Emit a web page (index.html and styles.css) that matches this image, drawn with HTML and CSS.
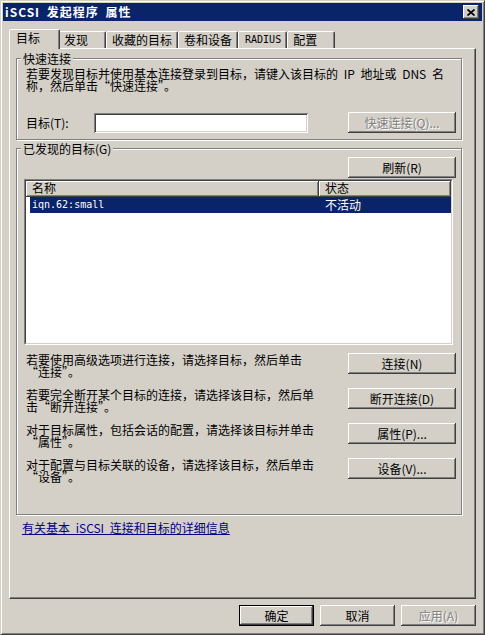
FILE: index.html
```html
<!DOCTYPE html>
<html>
<head>
    <meta charset="utf-8">
    <title>iSCSI 发起程序 属性</title>
    <link rel="stylesheet" href="styles.css">
</head>
<body>
<div class="window">
    <div class="titlebar">
        <span class="title">iSCSI 发起程序 属性</span>
        <button class="close">
            <svg width="8" height="7" viewBox="0 0 8 7">
                <path d="M0.5 0.5L7.5 6.5M7.5 0.5L0.5 6.5" stroke="#000" stroke-width="1.7" fill="none"/>
            </svg>
        </button>
    </div>

    <div class="tabs">
        <div class="tab active">目标</div>
        <div class="tab">发现</div>
        <div class="tab">收藏的目标</div>
        <div class="tab">卷和设备</div>
        <div class="tab mono">RADIUS</div>
        <div class="tab">配置</div>
    </div>

    <div class="panel">
        <div class="group quick">
            <div class="group-title">快速连接</div>
            <p class="desc">若要发现目标并使用基本连接登录到目标，请键入该目标的 IP 地址或 DNS 名<br>称，然后单击“快速连接”。</p>
            <div class="quick-row">
                <label class="field-label">目标(T):</label>
                <input class="field" type="text">
                <button class="btn side" disabled>快速连接(Q)...</button>
            </div>
        </div>

        <div class="group found">
            <div class="group-title">已发现的目标(G)</div>
            <button class="btn side refresh">刷新(R)</button>
            <div class="list">
                <div class="list-inner">
                    <div class="list-head">
                        <div class="col-name">名称</div>
                        <div class="col-state">状态</div>
                    </div>
                    <div class="list-row selected">
                        <div class="cell-name mono">iqn.62:small</div>
                        <div class="cell-state">不活动</div>
                    </div>
                </div>
            </div>

            <div class="actions">
                <div class="action">
                    <p>若要使用高级选项进行连接，请选择目标，然后单击<wbr>“连接”。</p>
                    <button class="btn side">连接(N)</button>
                </div>
                <div class="action">
                    <p>若要完全断开某个目标的连接，请选择该目标，然后单击<wbr>“断开连接”。</p>
                    <button class="btn side">断开连接(D)</button>
                </div>
                <div class="action">
                    <p>对于目标属性，包括会话的配置，请选择该目标并单击<wbr>“属性”。</p>
                    <button class="btn side">属性(P)...</button>
                </div>
                <div class="action">
                    <p>对于配置与目标关联的设备，请选择该目标，然后单击<wbr>“设备”。</p>
                    <button class="btn side">设备(V)...</button>
                </div>
            </div>
        </div>

        <a class="help-link" href="#">有关基本 iSCSI 连接和目标的详细信息</a>
    </div>

    <div class="footer">
        <button class="btn bottom default">确定</button>
        <button class="btn bottom">取消</button>
        <button class="btn bottom" disabled>应用(A)</button>
    </div>
</div>
</body>
</html>
```

FILE: styles.css
```css
body {
    margin: 0;
    background-color: #d4d0c8;
    font-family: "Noto Sans CJK SC", sans-serif;
    font-size: 12px;
    line-height: 12px;
    word-spacing: 3px;
    color: #000000;
}
.mono {
    font-family: "DejaVu Sans Mono", "Noto Sans CJK SC", monospace;
    font-size: 10px;
}
.window {
    width: 485px;
    height: 635px;
    box-sizing: border-box;
    display: flex;
    flex-direction: column;
    padding: 2px;
    background-color: #d4d0c8;
    border: 1px solid;
    border-color: #d4d0c8 #404040 #404040 #d4d0c8;
    box-shadow: inset 1px 1px #ffffff, inset -1px -1px #808080;
}
.titlebar {
    flex: none;
    height: 18px;
    display: flex;
    align-items: center;
    justify-content: space-between;
    padding: 0 3px 0 2px;
    background-color: #0a246a;
    color: #ffffff;
    font-weight: bold;
}
.title {
    letter-spacing: 1px;
}
.close {
    width: 16px;
    height: 14px;
    padding: 0;
    border: none;
    background-color: #d4d0c8;
    display: flex;
    align-items: center;
    justify-content: center;
    box-shadow: inset -1px -1px #404040, inset 1px 1px #ffffff, inset -2px -2px #808080;
}

/* tabs */
.tabs {
    flex: none;
    height: 19px;
    display: flex;
    align-items: flex-end;
    margin: 8px 6px 0;
    padding-left: 2px;
    position: relative;
    z-index: 1;
}
.tab {
    box-sizing: border-box;
    height: 17px;
    min-width: 48px;
    padding: 2px 5px 0;
    text-align: left;
    white-space: nowrap;
    background-color: #d4d0c8;
    border: 1px solid;
    border-bottom: none;
    border-color: #ffffff #404040 transparent #ffffff;
    border-radius: 2px 2px 0 0;
    box-shadow: inset -1px 0 #808080;
}
.tab.mono {
    line-height: 12px;
    padding-left: 6px;
}
.tab.active {
    height: 20px;
    min-width: 51px;
    margin: 0 -2px -1px;
    padding: 2px 6px 0;
    position: relative;
}

/* page */
.panel {
    flex: 1;
    display: flex;
    flex-direction: column;
    margin: 0 6px;
    padding: 9px 13px 0 6px;
    border: 1px solid;
    border-color: #ffffff #404040 #404040 #ffffff;
    box-shadow: inset -1px -1px #808080;
}
.group {
    display: flex;
    flex-direction: column;
    padding: 0 5px 6px 9px;
    border: 1px solid #808080;
    box-shadow: inset 1px 1px #ffffff, 1px 1px #ffffff;
}
.group-title {
    width: fit-content;
    margin: -6px 0 0 -5px;
    padding: 0 2px;
    background-color: #d4d0c8;
}
.desc {
    margin: 3px 0 0;
}
.quick-row {
    display: flex;
    align-items: center;
    margin-top: 20px;
}
.field-label {
    width: 68px;
}
.field {
    box-sizing: border-box;
    width: 214px;
    height: 20px;
    margin: 0;
    padding: 0 3px;
    border: none;
    outline: none;
    background-color: #ffffff;
    font: inherit;
    box-shadow: inset 1px 1px #808080, inset -1px -1px #ffffff, inset 2px 2px #404040, inset -2px -2px #d4d0c8;
}

/* buttons */
.btn {
    box-sizing: border-box;
    height: 21px;
    margin: 0;
    padding: 0;
    border: none;
    background-color: #d4d0c8;
    font-family: inherit;
    font-size: 12px;
    line-height: 12px;
    color: #000000;
    box-shadow: inset -1px -1px #404040, inset 1px 1px #ffffff, inset -2px -2px #808080;
}
.btn:disabled {
    color: #808080;
    text-shadow: 1px 1px #ffffff;
}
.btn.side {
    width: 108px;
    flex: none;
}
.quick-row .btn {
    margin-left: auto;
}
.btn.bottom {
    width: 75px;
}
.btn.default {
    box-shadow: inset 0 0 0 1px #000000, inset -2px -2px #404040, inset 2px 2px #ffffff, inset -3px -3px #808080;
}

/* discovered targets */
.found {
    margin-top: 8px;
    padding-bottom: 31px;
}
.refresh {
    align-self: flex-end;
    margin-top: 2px;
}
.list {
    height: 166px;
    box-sizing: border-box;
    margin: 1px 3px 0 -2px;
    border: 1px solid;
    border-color: #808080 #ffffff #ffffff #808080;
}
.list-inner {
    height: 100%;
    box-sizing: border-box;
    background-color: #ffffff;
    border: 1px solid;
    border-color: #404040 #d4d0c8 #d4d0c8 #404040;
}
.list-head {
    display: flex;
    height: 16px;
}
.list-head div {
    box-sizing: border-box;
    height: 16px;
    padding: 1px 0 0 6px;
    background-color: #d4d0c8;
    border-right: 1px solid #404040;
    border-bottom: 1px solid #404040;
    box-shadow: inset 1px 1px #ffffff, inset -1px -1px #808080;
}
.col-name {
    width: 293px;
}
.col-state {
    flex: 1;
}
.list-row {
    display: flex;
    height: 16px;
    line-height: 16px;
    margin-left: 4px;
}
.list-row.selected {
    background-color: #0a246a;
    color: #ffffff;
}
.cell-name {
    box-sizing: border-box;
    width: 289px;
    padding-left: 2px;
}
.cell-state {
    padding-left: 6px;
}
.actions {
    display: flex;
    flex-direction: column;
    gap: 10px;
    margin-top: 8px;
}
.action {
    display: flex;
    align-items: flex-start;
    justify-content: space-between;
}
.action p {
    width: 290px;
    margin: 1px 0 0;
}
.help-link {
    margin: 7px 0 0 6px;
    width: fit-content;
    color: #000080;
    text-decoration: underline;
}

/* dialog buttons */
.footer {
    flex: none;
    display: flex;
    justify-content: flex-end;
    gap: 6px;
    padding: 6px 6px 6px 0;
}
```
